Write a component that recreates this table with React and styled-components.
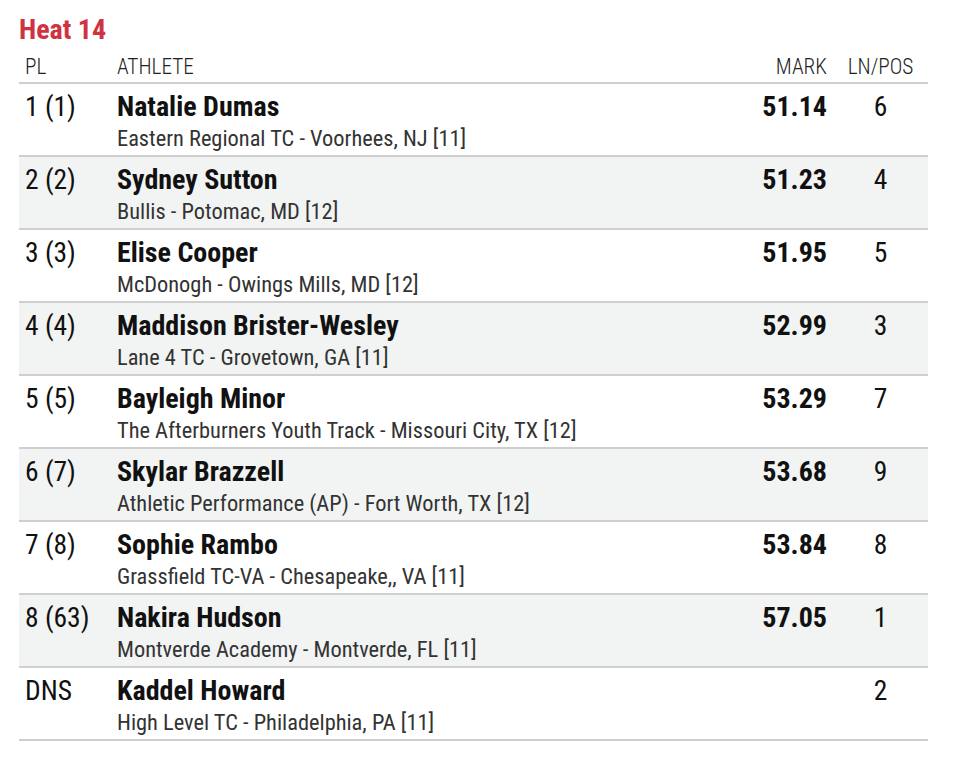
import React from 'react'
import styled, {createGlobalStyle} from 'styled-components'

const GlobalStyle = createGlobalStyle`
  body {
    margin: 0;
    background: #fff;
    font-family: 'Roboto Condensed', Roboto, 'Liberation Sans Narrow', sans-serif;
    font-stretch: condensed;
    color: #111;
  }
`

const Page = styled.div`
  padding: 14px 28px 0 19px;
`

const Title = styled.h2`
  margin: 0 0 9px 0;
  font-size: 28px;
  line-height: 32px;
  font-weight: 700;
  color: #cf3341;
`

const Grid = styled.div`
  display: grid;
  grid-template-columns: 92px 1fr 110px 95px;
`

const HeadCell = styled.div`
  font-size: 21.3px;
  line-height: 24px;
  font-weight: 300;
  color: #222;
  padding: 0 6px 3px 6px;
  border-bottom: 2px solid #cfcfcf;
  text-align: ${p => p.align || 'left'};
`

const Row = styled.div`
  display: contents;
  & > div {
    background: ${p => (p.shaded ? '#f2f3f3' : '#fff')};
    border-bottom: 2px solid #cfcfcf;
    padding: 8px 6px 4px 6px;
  }
`

const Cell = styled.div`
  line-height: 30px;
  font-weight: ${p => (p.bold ? 700 : 400)};
  font-size: ${p => (p.bold ? '28px' : '27.5px')};
  text-align: ${p => p.align || 'left'};
  color: #111;
`

const Name = styled.div`
  font-size: 28px;
  line-height: 30px;
  font-weight: 700;
  color: #111;
`

const Team = styled.div`
  margin-top: 3px;
  font-size: 22.4px;
  line-height: 26px;
  color: #333;
`

const results = [
  {pl: '1 (1)', name: 'Natalie Dumas', team: 'Eastern Regional TC - Voorhees, NJ [11]', mark: '51.14', ln: '6'},
  {pl: '2 (2)', name: 'Sydney Sutton', team: 'Bullis - Potomac, MD [12]', mark: '51.23', ln: '4'},
  {pl: '3 (3)', name: 'Elise Cooper', team: 'McDonogh - Owings Mills, MD [12]', mark: '51.95', ln: '5'},
  {pl: '4 (4)', name: 'Maddison Brister-Wesley', team: 'Lane 4 TC - Grovetown, GA [11]', mark: '52.99', ln: '3'},
  {pl: '5 (5)', name: 'Bayleigh Minor', team: 'The Afterburners Youth Track - Missouri City, TX [12]', mark: '53.29', ln: '7'},
  {pl: '6 (7)', name: 'Skylar Brazzell', team: 'Athletic Performance (AP) - Fort Worth, TX [12]', mark: '53.68', ln: '9'},
  {pl: '7 (8)', name: 'Sophie Rambo', team: 'Grassfield TC-VA - Chesapeake,, VA [11]', mark: '53.84', ln: '8'},
  {pl: '8 (63)', name: 'Nakira Hudson', team: 'Montverde Academy - Montverde, FL [11]', mark: '57.05', ln: '1'},
  {pl: 'DNS', name: 'Kaddel Howard', team: 'High Level TC - Philadelphia, PA [11]', mark: '', ln: '2'},
]

const App = () => (
  <Page>
    <GlobalStyle />
    <Title>Heat 14</Title>
    <Grid>
      <HeadCell>PL</HeadCell>
      <HeadCell>ATHLETE</HeadCell>
      <HeadCell align="right">MARK</HeadCell>
      <HeadCell align="center">LN/POS</HeadCell>
      {results.map((r, i) => (
        <Row key={r.name} shaded={i % 2 === 1}>
          <Cell>{r.pl}</Cell>
          <div>
            <Name>{r.name}</Name>
            <Team>{r.team}</Team>
          </div>
          <Cell bold align="right">{r.mark}</Cell>
          <Cell align="center">{r.ln}</Cell>
        </Row>
      ))}
    </Grid>
  </Page>
)

export default App
